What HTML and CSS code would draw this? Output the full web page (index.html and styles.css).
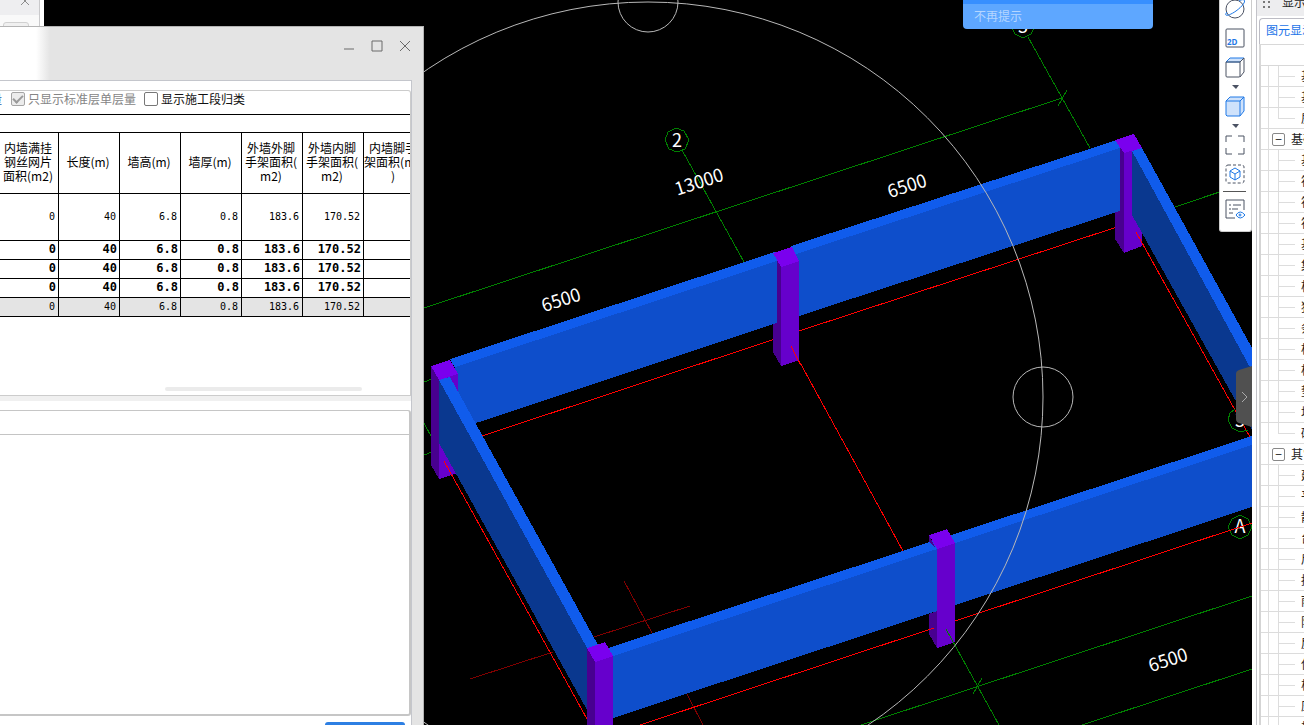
FILE: index.html
```
<!DOCTYPE html>
<html lang="zh-CN">
<head>
<meta charset="utf-8">
<title>三维查看</title>
<link rel="stylesheet" href="styles.css">
</head>
<body>
<main class="workspace">
  <section class="viewport">
    <svg class="scene" viewBox="0 0 1252 725" preserveAspectRatio="xMinYMin slice" shape-rendering="crispEdges">
      <g class="axis">
        <path d="M424 308L1062 98M1058 106L1067 90M1028 37L1090 148M682 150L744 262M1175 207L1252 181M424 382L432 379M424 423L432 438M424 455L432 452M861 725L1252 596M1082 725L1252 669M973 694L982 678"/>
        <path d="M676 128l8 3 5 9-4 9-8 3-8-3-4-9 3-8zM1023 14l8 3 4 9-4 8-8 4-8-4-4-8 4-9zM1240 515l8 4 4 8-4 8-8 4-8-4-4-8 4-8z"/>
      </g>
      <path class="origin" d="M470 679L553 652M594 637L690 606M624 581L652 633M687 694L703 725"/>
      <path class="grid" d="M482 436L775 339M799 331L1117 227M792 348L903 551"/>

      <path class="wall-top" d="M450 359L775 252L778 262L455 368z"/>
      <path class="wall-face" d="M455 367L777 261V323L476 423L450 380z"/>
      <path class="wall-top" d="M791 246L1117 140L1121 149L796 255z"/>
      <path class="wall-face" d="M796 254L1120 148V211L799 316z"/>

      <path class="col-side" d="M777 259L781 267V366L773 352V324L777 323z"/>
      <path class="col-face" d="M781 267L799 261V360L781 366z"/>
      <path class="col-top" d="M773 253L792 247L799 261L781 267z"/>

      <path class="col-side" d="M1120 147L1124 153V253L1115 239V212L1120 211z"/>
      <path class="col-face" d="M1124 153L1142 148V246L1124 253z"/>
      <path class="wall-side" d="M1132 151L1252 371V430L1132 215z"/>
      <path class="wall-top" d="M1132 151L1142 148L1252 348V371z"/>
      <path class="col-top" d="M1115 140L1134 134L1142 148L1124 153z"/>

      <path class="col-side" d="M431 366L439 380V479L431 465z"/>
      <path class="col-face" d="M439 380L458 373V473L439 479z"/>
      <path class="wall-face" d="M458 390L476 423L458 412z"/>
      <path class="col-top" d="M431 366L450 360L458 374L439 380z"/>
      <path class="wall-side" d="M439 380L587 647V710L439 443z"/>
      <path class="wall-top" d="M439 380L450 377L598 645L587 648z"/>

      <path class="wall-top" d="M608 648L1252 436V446L613 657z"/>
      <path class="wall-face" d="M613 656L1252 445V507L613 718z"/>
      <path class="col-side" d="M587 648L595 662V725H587z"/>
      <path class="col-face" d="M595 662L613 656V725H595z"/>
      <path class="col-top" d="M587 648L605 642L613 656L595 662z"/>
      <path class="col-side" d="M929 535L936 549L929 541zM929 614L937 611V648L929 634z"/>
      <path class="col-face" d="M937 549L955 543V642L937 648z"/>
      <path class="col-top" d="M929 535L947 529L955 543L937 549z"/>

      <path class="grid" d="M444 461L587 719M640 725L934 628M955 621L1252 523M791 346L800 364M1136 232L1250 437"/>
      <path class="axis" d="M946 629L999 725M1235 409l-5 4-2 7 4 8 8 4 8-2"/>
      <g class="orbit"><circle cx="648" cy="397" r="395"/><circle cx="648" cy="2" r="30"/><circle cx="1043" cy="397" r="30"/></g>
      <g class="labels">
        <text transform="translate(563 306) rotate(-18)">6500</text>
        <text transform="translate(909 192) rotate(-18)">6500</text>
        <text transform="translate(1170 666) rotate(-18)">6500</text>
        <text transform="translate(701 188) rotate(-18)">13000</text>
        <text x="677" y="147">2</text><text x="1023" y="33">3</text><text x="1240" y="533">A</text><text x="1240" y="427">3</text>
      </g>
      <path class="grid" d="M1228 531L1252 523"/>
    </svg>

    <div class="back-window">
      <button class="back-close" aria-label="关闭"><svg width="10" height="10" viewBox="0 0 10 10"><path d="M1 1l8 8M9 1L1 9"/></svg></button>
      <span class="back-tab"></span>
    </div>

    <button class="notice">不再提示</button>

    <nav class="view-tools">
      <button class="tool" aria-label="动态观察"><svg viewBox="0 0 20 20"><circle cx="10" cy="10" r="9"/><path class="blue" d="M2 13C-2 18 4 17 11 12C18 7 21 2 19 1C18 0 16 1 14 2"/></svg></button>
      <button class="tool" aria-label="二维"><svg viewBox="0 0 20 20"><rect x="1" y="1" width="18" height="18" rx="1"/><text class="two-d" x="2" y="17">2D</text></svg></button>
      <button class="tool drop" aria-label="线框"><svg viewBox="0 0 20 33"><path class="tint" d="M1 5L5 1H19L15 5z"/><path d="M1 5H15V19Q15 20 14 20H2Q1 20 1 19zM15 5L19 1V15L15 20"/><path class="arrow" d="M7 28h7l-3 4z"/></svg></button>
      <button class="tool drop" aria-label="实体"><svg viewBox="0 0 20 33"><path class="tint" d="M1 5L5 1H19V15L15 20H2L1 19z"/><path class="blue" d="M1 5H15V20M15 5L19 1"/><path class="arrow" d="M7 28h7l-3 4z"/></svg></button>
      <button class="tool" aria-label="全屏"><svg viewBox="0 0 20 20"><path d="M1 7V1H7M13 1h6v6M19 13v6h-6M7 19H1v-6"/></svg></button>
      <button class="tool" aria-label="局部三维"><svg viewBox="0 0 20 20"><rect x="1" y="1" width="18" height="18" rx="2" stroke-dasharray="3 2"/><path class="blue" d="M10 4l5 3v6l-5 3-5-3V7zM5 7l5 3 5-3M10 10v6"/></svg></button>
      <hr class="tool-line">
      <button class="tool" aria-label="显示设置"><svg viewBox="0 0 20 20"><path d="M10 19H1V1H19V11M4 6h2M8 6h8M4 10h2M7 10h6M4 14h4"/><path class="blue halo" d="M11 16q4-6 9 0q-5 6-9 0z"/><circle class="blue" cx="15" cy="16" r="1"/></svg></button>
    </nav>

    <button class="panel-handle" aria-label="收起"><svg viewBox="0 0 16 61"><path class="handle-bg" d="M16 0L3 4Q0 5 0 8V53Q0 56 3 57L16 61z"/><path class="handle-arrow" d="M6 26l5 5-5 5"/></svg></button>

    <section class="dialog">
      <header class="titlebar">
        <button aria-label="最小化"><svg viewBox="0 0 12 12"><path d="M1 9h10"/></svg></button>
        <button aria-label="最大化"><svg viewBox="0 0 12 12"><path d="M1 1h10v10H1z"/></svg></button>
        <button aria-label="关闭"><svg viewBox="0 0 12 12"><path d="M1 1l10 10M11 1L1 11"/></svg></button>
      </header>
      <div class="dialog-body">
        <div class="report">
          <form class="options">
            <span class="cut">量</span>
            <input type="checkbox" id="std" checked disabled><label class="muted" for="std">只显示标准层单层量</label>
            <input type="checkbox" id="seg"><label for="seg">显示施工段归类</label>
          </form>
          <div class="table-wrap">
            <table>
              <colgroup><col class="first"><col><col><col><col><col><col></colgroup>
              <thead><tr><th>内墙满挂<br>钢丝网片<br>面积(m2)</th><th>长度(m)</th><th>墙高(m)</th><th>墙厚(m)</th><th>外墙外脚<br>手架面积(<br>m2)</th><th>外墙内脚<br>手架面积(<br>m2)</th><th>内墙脚手<br>架面积(m2<br>)</th></tr></thead>
              <tbody>
                <tr class="tall"><td>0</td><td>40</td><td>6.8</td><td>0.8</td><td>183.6</td><td>170.52</td><td></td></tr>
                <tr class="sum"><td>0</td><td>40</td><td>6.8</td><td>0.8</td><td>183.6</td><td>170.52</td><td></td></tr>
                <tr class="sum"><td>0</td><td>40</td><td>6.8</td><td>0.8</td><td>183.6</td><td>170.52</td><td></td></tr>
                <tr class="sum"><td>0</td><td>40</td><td>6.8</td><td>0.8</td><td>183.6</td><td>170.52</td><td></td></tr>
                <tr class="total"><td>0</td><td>40</td><td>6.8</td><td>0.8</td><td>183.6</td><td>170.52</td><td></td></tr>
              </tbody>
            </table>
          </div>
          <div class="scrollbar"></div>
        </div>
        <div class="splitter"></div>
        <div class="detail"><div class="detail-head"></div></div>
        <footer class="dialog-foot"><button class="primary" aria-label="确定"></button></footer>
      </div>
    </section>
  </section>

  <aside class="side">
    <header class="side-head"><svg width="7" height="7" viewBox="0 0 7 7"><path d="M0 0h2v2H0zM5 0h2v2H5zM0 5h2v2H0zM5 5h2v2H5z"/></svg><span>显示设置</span></header>
    <div class="tabs"><button class="tab">图元显示</button></div>
    <div class="tree-head"></div>
    <ul class="tree">
      <li>基槽</li><li>基坑</li><li class="last">房心</li>
      <li class="group"><button aria-label="折叠">−</button>基础</li>
      <li>基础梁</li><li>筏板</li><li>筏板</li><li>筏板</li><li>基础</li><li>集水坑</li><li>柱墩</li><li>独立</li><li>条形</li><li>桩承台</li><li>桩</li><li>垫层</li><li>地沟</li><li class="last">砖胎膜</li>
      <li class="group"><button aria-label="折叠">−</button>其它</li>
      <li>建筑</li><li>平整</li><li>散水</li><li>台阶</li><li>后浇带</li><li>挑檐</li><li>雨篷</li><li>阳台</li><li>屋面</li><li>保温层</li><li>栏板</li><li>压顶</li><li>栏杆</li>
    </ul>
  </aside>
</main>
</body>
</html>
```

FILE: styles.css
```
* { box-sizing: border-box; }
body {
  margin: 0;
  overflow: hidden;
  font: 12px/14px "Noto Sans CJK SC", sans-serif;
  color: #222;
}
button { padding: 0; border: 0; background: none; font: inherit; color: inherit; }
svg { display: block; fill: none; }

.workspace { display: flex; height: 100vh; }
.viewport { position: relative; flex: 1; min-width: 0; overflow: hidden; background: #000; }

.scene { width: 100%; height: 100%; }
.axis { stroke: #008000; }
.origin { stroke: #800000; }
.grid { stroke: #f00; }
.wall-top { fill: #105cec; }
.wall-face { fill: #0e4ecb; }
.wall-side { fill: #0a388f; }
.col-top { fill: #7a00ee; }
.col-face { fill: #6600cc; }
.col-side { fill: #480090; }
.orbit { stroke: #b8b8b8; shape-rendering: auto; }
.labels { fill: #fff; font: 18px "Noto Sans CJK SC", sans-serif; text-anchor: middle; }

.back-window {
  position: absolute;
  top: 0;
  left: 0;
  display: flex;
  flex-direction: column;
  width: 44px;
  height: 26px;
  overflow: hidden;
  background: linear-gradient(#eeeef0 15px, #f9f9f9 15px);
  border-right: 4px solid #fff;
  box-shadow: inset -1px 0 #c9c9cb;
}
.back-close { display: flex; flex: none; height: 15px; padding-left: 20px; }
.back-close svg { margin-top: -4px; stroke: #8c8c8c; }
.back-tab { flex: none; width: 26px; height: 20px; margin: 7px 0 0 3px; border: 1px solid #d0d0d0; border-radius: 3px; background: #f0f0f0; }

.notice {
  position: absolute;
  top: 0;
  left: 963px;
  width: 190px;
  height: 29px;
  padding: 3px 11px 0;
  border-radius: 0 0 4px 4px;
  background: linear-gradient(#378fff 4px, #5ea7ff 4px);
  color: #b5d6ff;
  text-align: left;
}

.view-tools {
  position: absolute;
  top: 0;
  right: 0;
  display: flex;
  flex-direction: column;
  align-items: center;
  gap: 9px;
  width: 33px;
  height: 232px;
  padding-right: 2px;
  background: #fff;
  border: solid #ccc;
  border-width: 0 1px 1px;
  border-radius: 0 0 3px 3px;
}
.tool { width: 20px; height: 20px; }
.tool:first-child { margin-top: -1px; }
.tool.drop { height: 30px; }
.tool svg { width: 20px; stroke: #4b5263; }
.tool .blue { stroke: #1e78e6; }
.tool .tint { fill: #cfe2fb; stroke: #1e78e6; }
.tool .arrow { fill: #4b5263; stroke: none; }
.tool .halo { fill: #fff; }
.tool .two-d { fill: #1e78e6; stroke: none; font: bold 8px "Open Sans", sans-serif; }
.tool-line { width: 23px; height: 1px; margin: -2px 0; border: 0; background: #555; }

.panel-handle { position: absolute; top: 366px; right: 0; width: 16px; height: 61px; }
.handle-bg { fill: #505050; }
.handle-arrow { stroke: #aaa; }

.dialog {
  position: absolute;
  top: 26px;
  bottom: 0;
  left: 0;
  display: flex;
  flex-direction: column;
  width: 424px;
  padding-right: 11px;
  border: solid #b4b4b4;
  border-width: 1px 1px 0 0;
  background: linear-gradient(90deg, #fff 36px, #e4e4e4 50px);
}
.titlebar { display: flex; justify-content: flex-end; gap: 16px; height: 53px; padding: 13px 1px 0 0; }
.titlebar button { width: 12px; height: 12px; }
.titlebar svg { stroke: #6a6a6a; }
.dialog-body {
  display: flex;
  flex: 1;
  flex-direction: column;
  min-height: 0;
  padding-top: 9px;
  border: solid #c4c6cc;
  border-width: 1px 1px 0 0;
  background: #fff;
}
.report {
  display: flex;
  flex-direction: column;
  height: 306px;
  border: solid #ccc;
  border-width: 1px 1px 1px 0;
  border-radius: 0 3px 0 0;
}
.options { display: flex; align-items: center; height: 23px; padding-bottom: 7px; color: #111; }
.options .cut { display: flex; justify-content: flex-end; width: 2px; overflow: hidden; margin-right: 9px; color: #1f5fa8; }
.options input {
  appearance: none;
  width: 14px;
  height: 14px;
  margin: 0 3px 0 0;
  border: 1px solid #777;
  border-radius: 2px;
  background: #fff;
}
.options input:checked {
  display: grid;
  place-items: center;
  border-color: #a5a5a5;
  background: #ececec;
}
.options input:checked::before {
  content: "";
  width: 4px;
  height: 8px;
  margin-bottom: 2px;
  border: solid #9a9a9a;
  border-width: 0 2px 2px 0;
  transform: rotate(45deg);
}
.options .muted { margin-right: 8px; color: #858585; }

.table-wrap { overflow: hidden; padding-top: 17px; border-top: 1px solid #000; }
table { width: 425px; table-layout: fixed; border-spacing: 0; border-top: 1px solid #000; color: #000; }
col { width: 61px; }
col.first { width: 59px; }
th, td { padding: 0 3px; border: solid #000; border-width: 0 1px 1px 0; white-space: nowrap; }
th { height: 61px; padding: 0 2px 2px 0; font-weight: 400; }
td { height: 19px; text-align: right; font: 10px/16px "DejaVu Sans Mono", monospace; }
.tall td { height: 47px; }
.sum td { padding: 0 2px 2px 0; font-size: 12px; font-weight: 700; }
.total td { background: #e4e4e4; }
.scrollbar { width: 197px; height: 4px; margin: auto 48px 4px auto; border-radius: 2px; background: #ebebeb; }
.splitter { height: 5px; background: #f0f0f0; }
.detail {
  flex: 1;
  margin: 9px 0 0;
  border: solid #c6c6c6;
  border-width: 1px 2px 2px 0;
  border-radius: 0 3px 3px 0;
}
.detail-head { height: 24px; border-bottom: 1px solid #c4c4c4; }
.dialog-foot { display: flex; justify-content: flex-end; height: 9px; padding: 6px 6px 0 0; overflow: hidden; }
.primary { width: 80px; height: 28px; flex: none; border-radius: 3px; background: #2d7fe3; }

.side { flex: none; width: 52px; overflow: hidden; border-left: 4px solid #fff; box-shadow: inset 1px 0 #c3c3c9; background: #fff; white-space: nowrap; }
.side-head { display: flex; gap: 12px; height: 16px; margin-left: 1px; padding: 1px 0 0 6px; background: #ededef; line-height: 2px; }
.side-head svg { flex: none; fill: #777; }
.tabs { height: 28px; padding: 2px 0 0 3px; }
.tab { height: 26px; padding: 0 6px 4px; border: solid #bcbcc4; border-width: 1px 0 0 1px; border-radius: 4px 0 0 0; color: #1a73e8; }
.tree-head { height: 22px; margin-left: 3px; border: solid #d8d8d8; border-width: 1px 0 1px 2px; }
.tree {
  margin: 0 0 0 3px;
  padding: 0;
  list-style: none;
  border-left: 2px solid #d4d4d4;
  background: linear-gradient(90deg, transparent 7px, #ddd 7px, #ddd 8px, transparent 8px);
}
.tree li {
  height: 21px;
  padding-left: 40px;
  border-bottom: 1px solid #dcdcdc;
  background:
    linear-gradient(#ddd, #ddd) 17px 0 / 1px 100% no-repeat,
    linear-gradient(#ddd, #ddd) 17px 10px / 17px 1px no-repeat;
  line-height: 20px;
}
.tree li.last {
  background:
    linear-gradient(#ddd, #ddd) 17px 0 / 1px 10px no-repeat,
    linear-gradient(#ddd, #ddd) 17px 10px / 17px 1px no-repeat;
}
.tree li.group { display: flex; align-items: center; gap: 6px; padding-left: 11px; background: none; }
.tree li button { flex: none; width: 13px; height: 13px; border: 1px solid #888; border-radius: 2px; background: #fff; line-height: 10px; }
```
